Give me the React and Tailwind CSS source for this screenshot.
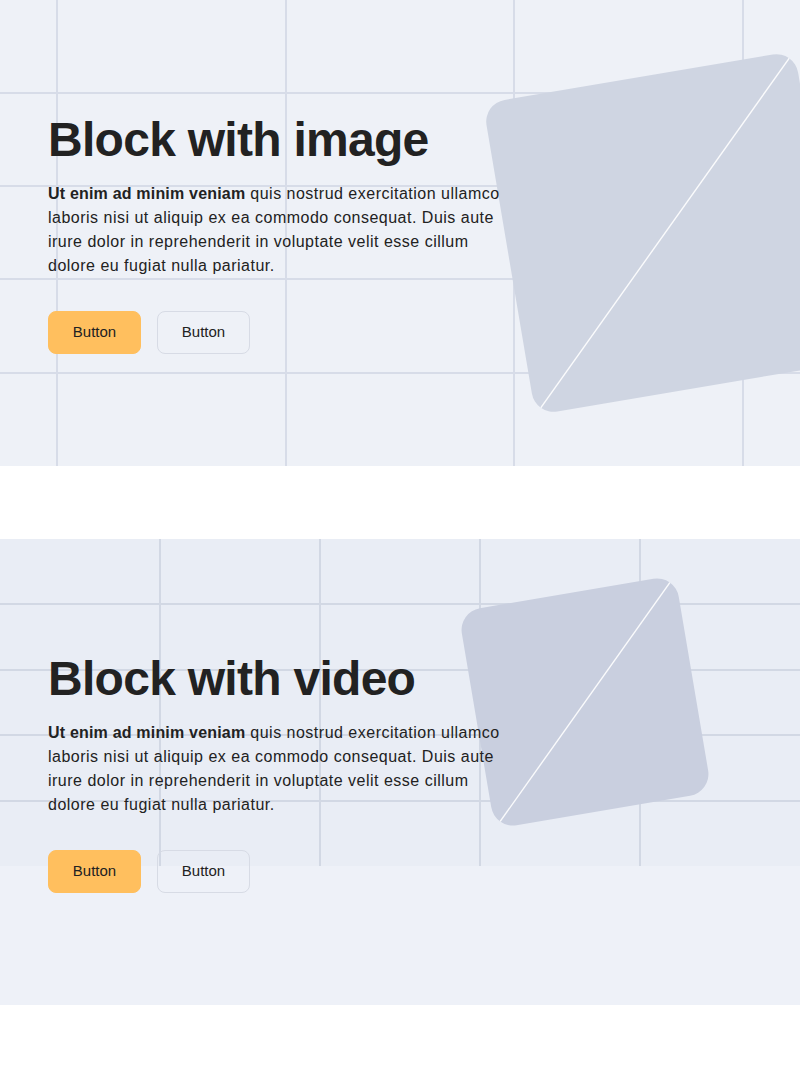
import React from 'react';

const font = { fontFamily: '"Liberation Sans", Arial, Helvetica, sans-serif' };

function Placeholder({ className }) {
  return (
    <div className={`absolute rotate-[-9.6deg] overflow-hidden rounded-[22px] ${className}`}>
      <svg className="h-full w-full" viewBox="0 0 100 100" preserveAspectRatio="none">
        <line
          x1="100"
          y1="0"
          x2="0"
          y2="100"
          stroke="#ffffff"
          strokeWidth="1.4"
          strokeOpacity="0.9"
          vectorEffect="non-scaling-stroke"
        />
      </svg>
    </div>
  );
}

function Content({ title }) {
  return (
    <div className="relative z-10 flex h-full flex-col px-12 pt-[116px]">
      <h2 className="mb-[18px] text-[48px] font-bold leading-[48px] tracking-[-0.015em] text-[#222]">{title}</h2>
      <p className="max-w-[460px] text-base leading-6 tracking-[0.031em] text-[#222]">
        <span className="font-bold tracking-[0.012em]">Ut enim ad minim veniam</span> quis nostrud exercitation
        ullamco laboris nisi ut aliquip ex ea commodo consequat. Duis aute irure dolor in reprehenderit in voluptate
        velit esse cillum dolore eu fugiat nulla pariatur.
      </p>
      <div className="mt-[33px] flex gap-4">
        <button className="flex h-[43px] w-[93px] items-center justify-center rounded-lg border border-[#ffbf5e] bg-[#ffbf5e] text-[15px] text-[#222]">
          Button
        </button>
        <button className="flex h-[43px] w-[93px] items-center justify-center rounded-lg border border-[#d7dbe5] text-[15px] text-[#222]">
          Button
        </button>
      </div>
    </div>
  );
}

export default function App() {
  return (
    <div className="min-h-[1079px] bg-white" style={font}>
      {/* block with image */}
      <section className="relative h-[466px] overflow-hidden bg-[#eef1f7]">
        <div className="absolute inset-0 flex gap-[226.5px] pl-[56px]">
          {[0, 1, 2, 3].map((i) => (
            <div key={i} className="h-full w-[2px] shrink-0 bg-[#d7dce8]" />
          ))}
        </div>
        <div className="absolute inset-0 flex flex-col gap-[91.2px] pt-[92px]">
          {[0, 1, 2, 3].map((i) => (
            <div key={i} className="h-[2px] w-full shrink-0 bg-[#d7dce8]" />
          ))}
        </div>
        <Placeholder className="left-[507px] top-[75px] h-[316px] w-[316px] bg-[#cfd5e2]" />
        <Content title="Block with image" />
      </section>

      {/* block with video */}
      <section className="relative mt-[73px] h-[466px] overflow-hidden bg-[#eef1f8]">
        <div className="absolute inset-x-0 top-0 h-[327px] bg-[#e9edf5]">
          <div className="absolute inset-0 flex gap-[158px] pl-[159px]">
            {[0, 1, 2, 3].map((i) => (
              <div key={i} className="h-full w-[2px] shrink-0 bg-[#d2d8e4]" />
            ))}
          </div>
          <div className="absolute inset-0 flex flex-col gap-[63.4px] pt-[64.4px]">
            {[0, 1, 2, 3].map((i) => (
              <div key={i} className="h-[2px] w-full shrink-0 bg-[#d2d8e4]" />
            ))}
          </div>
          <Placeholder className="left-[475px] top-[53px] h-[220px] w-[220px] bg-[#c9cfdf]" />
        </div>
        <Content title="Block with video" />
      </section>
    </div>
  );
}
